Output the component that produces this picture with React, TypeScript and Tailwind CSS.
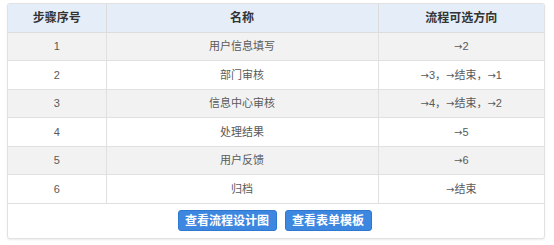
import React from "react";

const rows: [string, string, string][] = [
  ["1", "用户信息填写", "→2"],
  ["2", "部门审核", "→3，→结束，→1"],
  ["3", "信息中心审核", "→4，→结束，→2"],
  ["4", "处理结果", "→5"],
  ["5", "用户反馈", "→6"],
  ["6", "归档", "→结束"],
];

function Dir({ text }: { text: string }) {
  const parts = text.split("→");
  return (
    <>
      {parts.map((p, i) => (
        <React.Fragment key={i}>
          {i > 0 && (
            <span className="text-[10px]" style={{ fontFamily: '"DejaVu Sans", sans-serif' }}>
              →
            </span>
          )}
          {p}
        </React.Fragment>
      ))}
    </>
  );
}

export default function App() {
  return (
    <div
      className="w-[554px] h-[245px] bg-white pt-[3px] pl-[7px]"
      style={{ fontFamily: '"Liberation Sans", "Noto Sans CJK SC", sans-serif' }}
    >
      <div className="w-[538px] border border-[#e2e2e2] rounded-[3px] shadow-[0_1px_2px_rgba(0,0,0,0.08)] bg-white">
        <table className="w-full border-collapse text-[11px] text-[#5a5a5a]">
          <thead>
            <tr className="bg-[#e5eef8] h-[28px]">
              <th className="w-[98px] border-r border-b border-[#dcdcdc] font-bold text-[12px] text-[#333]">步骤序号</th>
              <th className="w-[272px] border-r border-b border-[#dcdcdc] font-bold text-[12px] text-[#333]">名称</th>
              <th className="border-b border-[#dcdcdc] font-bold text-[12px] text-[#333]">流程可选方向</th>
            </tr>
          </thead>
          <tbody>
            {rows.map((r, i) => (
              <tr key={i} className={(i % 2 === 0 ? "bg-[#f2f2f2]" : "bg-white") + " h-[28.6px]"}>
                <td className="border-r border-b border-[#e0e0e0] text-center">{r[0]}</td>
                <td className="border-r border-b border-[#e0e0e0] text-center">{r[1]}</td>
                <td className="border-b border-[#e0e0e0] text-center">
                  <Dir text={r[2]} />
                </td>
              </tr>
            ))}
          </tbody>
        </table>
        <div className="flex justify-center gap-[8px] pt-[6px] pb-[7px] pr-[3px]">
          <button className="h-[21px] w-[99px] rounded-[3px] bg-[#3d87e0] text-white text-[12px] font-bold border border-[#2f78d0]">查看流程设计图</button>
          <button className="h-[21px] w-[87px] rounded-[3px] bg-[#3d87e0] text-white text-[12px] font-bold border border-[#2f78d0]">查看表单模板</button>
        </div>
      </div>
    </div>
  );
}
